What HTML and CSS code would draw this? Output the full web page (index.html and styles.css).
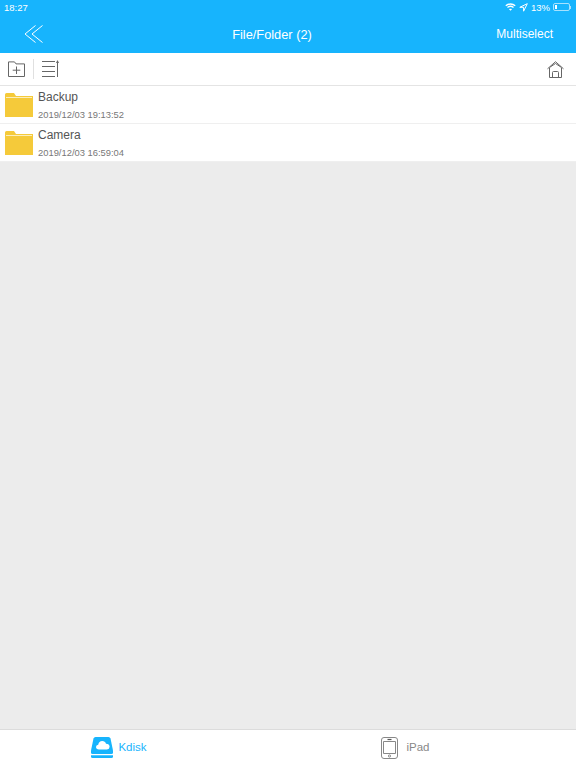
FILE: index.html
```html
<!DOCTYPE html>
<html lang="en">
<head>
    <meta charset="UTF-8">
    <meta name="viewport" content="width=device-width, initial-scale=1.0">
    <title>Kdisk</title>
    <link rel="stylesheet" href="styles.css">
</head>
<body>
    <div class="page">
        <div class="header">
            <div class="status">
                <span class="time">18:27</span>
                <div class="status-right">
                    <svg class="wifi" width="11" height="8" viewBox="0 0 12 9" fill="none" stroke="#fff">
                        <path d="M.7 3.2C3.700.4 8.300.4 11.300 3.200" stroke-width="1.500"/>
                        <path d="M2.600 5.100C4.500 3.500 7.500 3.500 9.400 5.100" stroke-width="1.500"/>
                        <path d="M6 8.800 4.300 6.900C5.300 6.200 6.700 6.200 7.700 6.900Z" fill="#fff" stroke="none"/>
                    </svg>
                    <svg class="loc" width="9" height="9" viewBox="0 0 9 9" fill="none" stroke="#fff">
                        <path d="M8.300.7.800 4.300H4.600V8.200Z" stroke-width="1"/>
                    </svg>
                    <span class="percent">13%</span>
                    <div class="battery"><div class="battery-level"></div></div>
                    <div class="battery-tip"></div>
                </div>
            </div>
            <div class="nav">
                <svg class="back" width="20" height="18" viewBox="0 0 20 18" fill="none" stroke="#fff" stroke-width="1">
                    <path d="M11.500.5 1 9l10.500 8.500"/>
                    <path d="M18.500.5 8 9l10.500 8.500"/>
                </svg>
                <span class="title">File/Folder (2)</span>
                <span class="multi">Multiselect</span>
            </div>
        </div>

        <div class="toolbar">
            <svg class="tool-icon" width="17" height="17" viewBox="0 0 17 17" fill="none" stroke="#666" stroke-width="1">
                <path d="M.5 15.500V.9H6.500L8 2.900H16.500V15.500Z"/>
                <path d="M8.500 5.500V13M4.700 9.200H12.300"/>
            </svg>
            <div class="tool-sep"></div>
            <svg class="tool-icon" width="17" height="18" viewBox="0 0 17 18" fill="none" stroke="#666" stroke-width="1.200">
                <path d="M0 1.500H13M0 6.500H13M0 11.500H13M0 16.500H13"/>
                <path d="M15.500 17V2" stroke-width="1"/>
                <path d="M15.500 0 17 3H14Z" fill="#666" stroke="none"/>
            </svg>
            <svg class="home" width="17" height="17" viewBox="0 0 17 17" fill="none" stroke="#666" stroke-width="1">
                <path d="M.5 7.800 8.500.7l8 7.100"/>
                <path d="M2.500 6.500 8.500 2.500l6 4"/>
                <path d="M2.500 7V16.500H14.500V7"/>
                <path d="M5.500 16.500V11.500Q5.500 10.500 6.500 10.500H10.500Q11.500 10.500 11.500 11.500V16.500"/>
            </svg>
        </div>

        <div class="list">
            <div class="row">
                <svg class="folder" width="28" height="24" viewBox="0 0 28 24">
                    <path d="M0 1.500Q0 0 1.500 0H9L11 3H28V24H0Z" fill="#f5ca3a"/>
                    <path d="M1 4.500H27" stroke="#fbeebc" stroke-width="1"/>
                </svg>
                <div class="row-text">
                    <div class="name">Backup</div>
                    <div class="date">2019/12/03 19:13:52</div>
                </div>
            </div>
            <div class="row">
                <svg class="folder" width="28" height="24" viewBox="0 0 28 24">
                    <path d="M0 1.500Q0 0 1.500 0H9L11 3H28V24H0Z" fill="#f5ca3a"/>
                    <path d="M1 4.500H27" stroke="#fbeebc" stroke-width="1"/>
                </svg>
                <div class="row-text">
                    <div class="name">Camera</div>
                    <div class="date">2019/12/03 16:59:04</div>
                </div>
            </div>
        </div>

        <div class="empty"></div>

        <div class="tabs">
            <div class="tab tab-active">
                <svg width="22" height="21" viewBox="0 0 22 21">
                    <path d="M4.500 0H17.500Q19 0 19.500 1.500L22 13.500V15.500Q22 17 20.500 17H1.500Q0 17 0 15.500V13.500L2.500 1.500Q3 0 4.500 0Z" fill="#17b4fd"/>
                    <path d="M8 12.500Q5 12.400 5 10 5 8 7.200 7.700 8 4 11.200 4 14.200 4 15 6.800 18.500 7 18.600 9.800 18.500 12.300 16 12.500Z" fill="#fff"/>
                    <path d="M0 18.300H22V19.500Q22 21 20.500 21H1.500Q0 21 0 19.500Z" fill="#17b4fd"/>
                </svg>
                <span>Kdisk</span>
            </div>
            <div class="tab tab-ipad">
                <svg width="17" height="22" viewBox="0 0 17 22" fill="none" stroke="#888" stroke-width="1">
                    <rect x=".5" y=".5" width="16" height="21" rx="2.500"/>
                    <path d="M2.500 4.500H14.500V16.500H2.500Z"/>
                    <path d="M6.500 2.500H10.500" stroke="#555" stroke-width="1.200"/>
                    <circle cx="8.500" cy="19" r="1.100"/>
                </svg>
                <span>iPad</span>
            </div>
        </div>
    </div>
</body>
</html>
```

FILE: styles.css
```css
*{
    margin: 0;
    padding: 0;
    box-sizing: border-box;
    font-family: "Liberation Sans", Arial, sans-serif;
}
body{
    background: #ececec;
}
.page{
    width: 576px;
    height: 768px;
    display: flex;
    flex-direction: column;
}

/* top bar */
.header{
    height: 53px;
    background: #17b4fd;
    color: #fff;
}
.status{
    height: 15px;
    display: flex;
    align-items: center;
    justify-content: space-between;
    padding: 0 5px 1px 4px;
    font-size: 9.500px;
}
.status-right{
    display: flex;
    align-items: center;
}
.wifi{
    margin-right: 3px;
    margin-left: 1px;
}
.loc{
    margin-right: 3px;
}
.percent{
    margin-right: 3px;
}
.battery{
    width: 17px;
    height: 8px;
    border: 1px solid #a6e2ff;
    border-radius: 2px;
    padding: 1px;
}
.battery-level{
    width: 2px;
    height: 100%;
    background: #fff;
}
.battery-tip{
    width: 1px;
    height: 3px;
    background: #a6e2ff;
}
.nav{
    height: 38px;
    display: flex;
    align-items: center;
    position: relative;
    padding: 0 23px 0 24px;
    justify-content: space-between;
}
.title{
    position: absolute;
    left: 0;
    right: 32px;
    text-align: center;
    font-size: 12.800px;
}
.multi{
    font-size: 12px;
}

/* toolbar */
.toolbar{
    height: 33px;
    background: #fff;
    border-bottom: 1px solid #e4e4e4;
    display: flex;
    align-items: center;
    padding: 0 12px 0 8px;
}
.tool-sep{
    width: 1px;
    height: 20px;
    background: #e0e0e0;
    margin: 0 8px 0 8px;
}
.home{
    margin-left: auto;
}

/* file rows */
.list{
    background: #fff;
}
.row{
    height: 38px;
    display: flex;
    align-items: center;
    padding-left: 5px;
    border-bottom: 1px solid #efefef;
}
.folder{
    margin-right: 5px;
    margin-top: 1px;
}
.name{
    font-size: 12px;
    color: #555;
    line-height: 16px;
    margin-top: 1px;
}
.date{
    font-size: 9.400px;
    color: #777;
    line-height: 12px;
    margin-top: 4px;
}
.empty{
    flex: 1;
    background: #ececec;
}

/* bottom tabs */
.tabs{
    height: 39px;
    background: #fff;
    border-top: 1px solid #dcdcdc;
    display: flex;
    padding-bottom: 4px;
}
.tab{
    width: 50%;
    display: flex;
    align-items: center;
    justify-content: center;
    font-size: 11.500px;
    color: #888;
}
.tab svg{
    margin-right: 5px;
    margin-top: 1px;
}
.tab-active{
    color: #17b4fd;
    padding-right: 50px;
}
.tab-ipad{
    padding-right: 53px;
}
.tab-ipad svg{
    margin-right: 8px;
}
```
